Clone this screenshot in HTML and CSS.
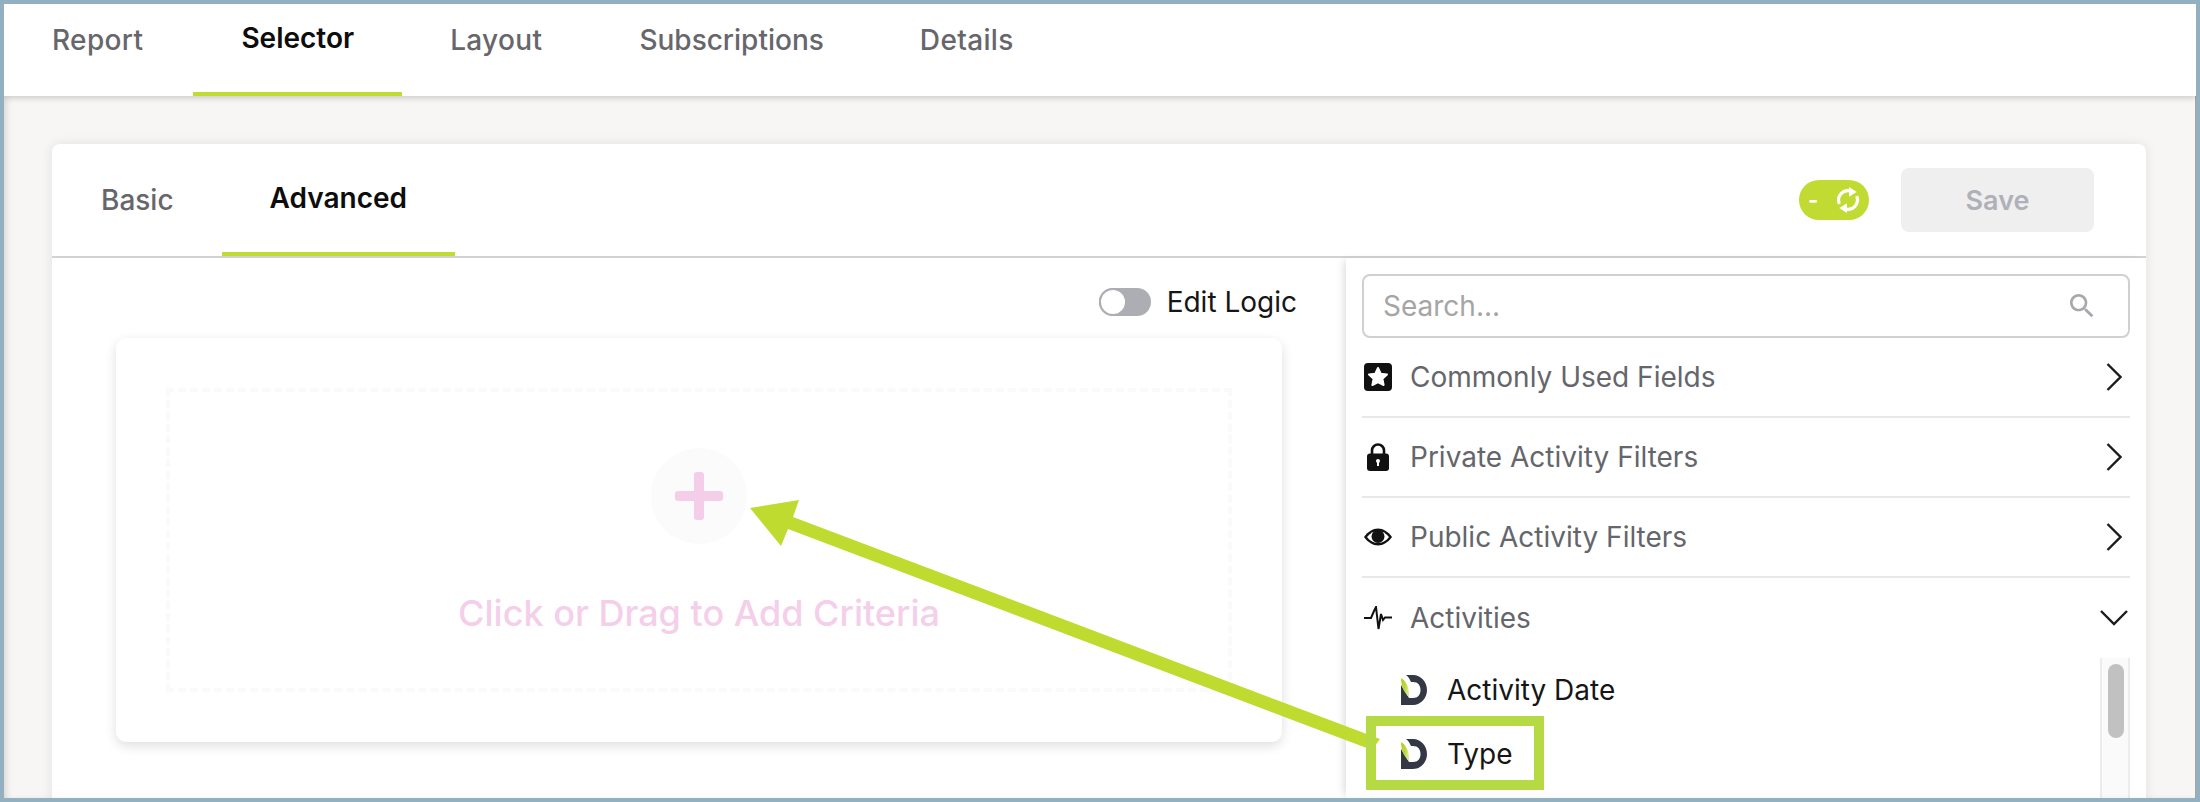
FILE: index.html
```html
<!DOCTYPE html>
<html lang="en">
<head>
<meta charset="utf-8">
<title>Selector</title>
<link rel="stylesheet" href="styles.css">
</head>
<body>
<div class="frame">
  <nav class="topbar">
    <a class="tab first">Report</a>
    <a class="tab active">Selector</a>
    <a class="tab wide">Layout</a>
    <a class="tab tight">Subscriptions</a>
    <a class="tab">Details</a>
  </nav>
  <main class="page">
    <section class="card">
      <header class="card-head">
        <div class="subtabs">
          <a class="subtab">Basic</a>
          <a class="subtab active">Advanced</a>
        </div>
        <div class="actions">
          <div class="auto-toggle">
            <span class="auto-minus">-</span>
            <svg class="auto-icon" viewBox="0 0 24 24" aria-hidden="true">
              <path class="auto-arc" d="M4 15.5A8.7 8.7 0 0 1 14 3.600"/>
              <polygon class="auto-head" points="13,0 20,4.600 13,9"/>
              <path class="auto-arc" d="M20 8.500A8.700 8.700 0 0 1 10 20.400"/>
              <polygon class="auto-head" points="11,24 4,19.400 11,15"/>
            </svg>
          </div>
          <button class="save">Save</button>
        </div>
      </header>
      <div class="card-body">
        <div class="builder">
          <div class="edit-row">
            <span class="switch"><span class="knob"></span></span>
            <span class="edit-label">Edit Logic</span>
          </div>
          <div class="criteria-card">
            <div class="dropzone">
              <div class="add-circle"><span class="plus"></span></div>
              <div class="add-text">Click or Drag to Add Criteria</div>
            </div>
          </div>
        </div>
        <aside class="fields">
          <div class="search">
            <span class="search-text">Search...</span>
            <svg class="search-icon" viewBox="0 0 24 24" aria-hidden="true"><path d="M15.5 14h-.79l-.28-.27C15.41 12.59 16 11.11 16 9.5 16 5.91 13.09 3 9.5 3S3 5.91 3 9.5 5.91 16 9.5 16c1.61 0 3.09-.59 4.23-1.57l.27.28v.79l5 4.99L20.49 19l-4.99-5zm-6 0C7.01 14 5 11.99 5 9.5S7.01 5 9.5 5 14 7.01 14 9.5 11.99 14 9.5 14z"/></svg>
          </div>
          <div class="group">
            <span class="group-icon">
              <svg width="28" height="28" viewBox="0 0 28 28" aria-hidden="true"><rect width="28" height="28" rx="4" fill="#111"/><polygon points="14,5 16.7,10.7 23,11.5 18.4,15.8 19.6,22 14,19 8.4,22 9.6,15.8 5,11.5 11.3,10.7" fill="#fff" stroke="#fff" stroke-width="2" stroke-linejoin="round"/></svg>
            </span>
            <span class="group-label">Commonly Used Fields</span>
            <svg class="chev-right" viewBox="0 0 16 28" aria-hidden="true"><polyline points="1.5,1 14.5,14 1.5,27"/></svg>
          </div>
          <div class="group">
            <span class="group-icon">
              <svg width="22" height="28" viewBox="0 0 22 28" aria-hidden="true"><path d="M5 12V7.500a6 6 0 0 1 12 0V12" fill="none" stroke="#111" stroke-width="2.600"/><rect y="10.500" width="22" height="17.500" rx="3" fill="#111"/><circle cx="11" cy="18" r="2" fill="#fff"/><rect x="10" y="18" width="2" height="5" fill="#fff"/></svg>
            </span>
            <span class="group-label">Private Activity Filters</span>
            <svg class="chev-right" viewBox="0 0 16 28" aria-hidden="true"><polyline points="1.5,1 14.5,14 1.5,27"/></svg>
          </div>
          <div class="group">
            <span class="group-icon">
              <svg width="28" height="18" viewBox="0 0 28 18" aria-hidden="true"><path d="M0 9C4 3.500 9 .5 14 .5S24 3.500 28 9C24 14.500 19 17.500 14 17.500S4 14.500 0 9Z" fill="#111"/><path d="M3 9C6 5 10 3 14 3S22 5 25 9C22 13 18 15 14 15S6 13 3 9Z" fill="#fff"/><circle cx="14" cy="8.500" r="6.500" fill="#111"/></svg>
            </span>
            <span class="group-label">Public Activity Filters</span>
            <svg class="chev-right" viewBox="0 0 16 28" aria-hidden="true"><polyline points="1.5,1 14.5,14 1.500,27"/></svg>
          </div>
          <div class="group open">
            <span class="group-icon">
              <svg width="28" height="24" viewBox="0 0 28 24" aria-hidden="true"><polyline points="0,12 7,12 10,5 12,1 14.500,23 17,8 19,14 21,11.500 28,11.500" fill="none" stroke="#111" stroke-width="2"/></svg>
            </span>
            <span class="group-label">Activities</span>
            <svg class="chev-down" viewBox="0 0 28 16" aria-hidden="true"><polyline points="1,1 14,14 27,1"/></svg>
          </div>
          <div class="items-wrap">
            <div class="items">
              <div class="item">
                <svg class="d-icon" viewBox="0 0 26 30" aria-hidden="true"><defs><linearGradient id="leaf" x1="0" y1="0" x2="1" y2="0.3"><stop offset="0" stop-color="#aecf22"/><stop offset="0.6" stop-color="#bcd83c"/><stop offset="1" stop-color="#dbe89a"/></linearGradient></defs><path class="d-dark" d="M5 0H12C20 0 26 7 26 15S20 30 12 30H0V10L8 23H12C17 23 19.500 19.500 19.500 15S17 7 12 7H10C9 4.500 7.500 2 5 0Z"/><path d="M0 3C5 6 8.500 12 8 22C3.500 18 0 12 0 3Z" fill="url(#leaf)"/></svg>
                <span>Activity Date</span>
              </div>
              <div class="item">
                <svg class="d-icon" viewBox="0 0 26 30" aria-hidden="true"><path class="d-dark" d="M5 0H12C20 0 26 7 26 15S20 30 12 30H0V10L8 23H12C17 23 19.500 19.500 19.500 15S17 7 12 7H10C9 4.500 7.500 2 5 0Z"/><path d="M0 3C5 6 8.500 12 8 22C3.500 18 0 12 0 3Z" fill="url(#leaf)"/></svg>
                <span>Type</span>
              </div>
            </div>
            <div class="scrolltrack"><div class="scrollthumb"></div></div>
          </div>
        </aside>
      </div>
    </section>
  </main>
  <svg class="annotation" viewBox="0 0 2200 802" aria-hidden="true">
    <polygon class="arrow" points="750,508 799,500 793,517 1380,739 1372,750 788,529 781,546"/>
    <rect class="callout" x="1371" y="721" width="168" height="64"/>
  </svg>
</div>
</body>
</html>
```
FILE: styles.css
```css
* { box-sizing: border-box; }
html, body { margin: 0; height: 802px; overflow: hidden; }
body { font-family: "Inter", "Liberation Sans", sans-serif; background: #f7f6f4; }

.frame {
  position: relative;
  height: 802px;
  border: 4px solid #92b0c0;
  display: flex;
  flex-direction: column;
  overflow: hidden;
}
.frame::after {
  content: "";
  position: absolute;
  inset: 0;
  pointer-events: none;
  box-shadow: inset 5px 0 7px -3px rgba(0, 0, 0, .14), inset -1px 0 0 #a6a6a6;
}

.topbar {
  flex: none;
  height: 92px;
  display: flex;
  background: #fff;
  box-shadow: 0 2px 6px rgba(0, 0, 0, .18);
  position: relative;
  z-index: 1;
}
.tab {
  padding: 0 48px 20px;
  display: flex;
  align-items: center;
  font-size: 28px;
  font-weight: 500;
  letter-spacing: .35px;
  color: #66666b;
}
.tab.first { padding-right: 50px; }
.tab.wide { padding-right: 49px; }
.tab.tight { letter-spacing: 0; }
.tab.active {
  color: #0d0d0d;
  font-weight: 600;
  letter-spacing: 0;
  border-bottom: 4px solid #c1db32;
}

.page {
  flex: 1;
  min-height: 0;
  padding: 48px 50px 0 48px;
}
.card {
  background: #fff;
  border-radius: 8px 8px 0 0;
  box-shadow: 0 0 12px rgba(0, 0, 0, .09);
  height: 700px;
}
.card-head {
  height: 114px;
  display: flex;
  justify-content: space-between;
  border-bottom: 2px solid #d2d2d2;
}
.subtabs { display: flex; height: 112px; padding-left: 1px; }
.subtab {
  padding: 0 48px;
  display: flex;
  align-items: center;
  font-size: 28px;
  font-weight: 500;
  color: #66666b;
}
.subtab.active {
  color: #0d0d0d;
  font-weight: 600;
  border-bottom: 4px solid #c1db32;
}
.actions {
  display: flex;
  align-items: center;
  gap: 32px;
  padding-right: 52px;
  height: 112px;
}
.auto-toggle {
  width: 70px;
  height: 40px;
  border-radius: 20px;
  background: #c1db32;
  display: flex;
  align-items: center;
  justify-content: space-between;
  padding: 0 8px 0 9px;
  color: #fff;
}
.auto-minus { font-size: 22px; font-weight: 700; line-height: 1; }
.auto-icon { width: 26px; height: 26px; }
.auto-arc { fill: none; stroke: #fff; stroke-width: 3; }
.auto-head { fill: #fff; }
.save {
  width: 193px;
  height: 64px;
  border: 0;
  border-radius: 8px;
  background: #efefef;
  color: #b0b0b8;
  font: 600 27px "Inter", sans-serif;
}

.card-body { display: flex; height: 540px; }
.builder { width: 1294px; padding: 0 64px; }
.edit-row {
  height: 80px;
  padding: 30px 0 0;
  margin-right: -15px;
  display: flex;
  justify-content: flex-end;
  gap: 16px;
}
.switch {
  width: 52px;
  height: 28px;
  border-radius: 14px;
  background: #adaeb3;
  display: block;
}
.knob {
  display: block;
  width: 28px;
  height: 28px;
  border-radius: 50%;
  background: #fff;
  border: 2px solid #adaeb3;
}
.edit-label {
  font-size: 28px;
  line-height: 28px;
  color: #161616;
}
.criteria-card {
  height: 404px;
  padding: 50px;
  border-radius: 10px;
  background: #fff;
  box-shadow: 0 4px 12px rgba(0, 0, 0, .13);
}
.dropzone {
  height: 304px;
  border: 4px dashed #fafafa;
  padding-top: 56px;
  display: flex;
  flex-direction: column;
  align-items: center;
}
.add-circle {
  width: 96px;
  height: 96px;
  border-radius: 50%;
  background: #fbfbfb;
  position: relative;
}
.plus::before, .plus::after {
  content: "";
  position: absolute;
  background: #f4cde9;
  border-radius: 3px;
}
.plus::before { left: 24px; top: 43px; width: 48px; height: 10px; }
.plus::after { left: 43px; top: 24px; width: 10px; height: 48px; }
.add-text {
  margin-top: 47px;
  font-size: 36px;
  line-height: 44px;
  font-weight: 500;
  color: #f4cfe9;
  white-space: nowrap;
}

.fields {
  width: 800px;
  padding: 16px 16px 0;
  box-shadow: -5px 0 8px -3px rgba(0, 0, 0, .14);
  position: relative;
  overflow: hidden;
}
.search {
  height: 64px;
  border: 2px solid #d0d0d0;
  border-radius: 8px;
  display: flex;
  align-items: center;
  justify-content: space-between;
  padding: 0 30px 0 19px;
}
.search-text { font-size: 28px; color: #a5a5a5; }
.search-icon { width: 32px; height: 32px; fill: #a8a8ac; }
.group {
  height: 80px;
  display: flex;
  align-items: center;
  border-bottom: 2px solid #e8e8e8;
  padding-left: 2px;
  padding-right: 8px;
}
.group.open { border-bottom: 0; padding-right: 2px; }
.group-icon {
  width: 28px;
  margin-right: 18px;
  display: flex;
  justify-content: center;
  flex: none;
}
.group-icon svg { display: block; }
.group-label { flex: 1; font-size: 28px; color: #65666b; }
.chev-right { width: 16px; height: 28px; }
.chev-down { width: 28px; height: 16px; }
.chev-right polyline, .chev-down polyline { fill: none; stroke: #1c1c1c; stroke-width: 2.4; }
.items-wrap { display: flex; justify-content: space-between; height: 200px; }
.items { padding-left: 39px; }
.item {
  height: 64px;
  display: flex;
  align-items: center;
  gap: 20px;
  font-size: 28px;
  color: #161616;
}
.d-icon { width: 26px; height: 30px; }
.d-dark { fill: #343844; }
.scrolltrack {
  width: 30px;
  background: #fafafa;
  border-left: 2px solid #ececec;
  border-right: 2px solid #ececec;
  padding: 6px 0 0 6px;
}
.scrollthumb {
  width: 16px;
  height: 74px;
  border-radius: 8px;
  background: #c1c1c1;
}

.annotation {
  position: absolute;
  left: -4px;
  top: -4px;
  width: 2200px;
  height: 802px;
  pointer-events: none;
  z-index: 2;
}
.arrow { fill: #bfdb30; }
.callout { fill: none; stroke: #b5da44; stroke-width: 10; }
```
